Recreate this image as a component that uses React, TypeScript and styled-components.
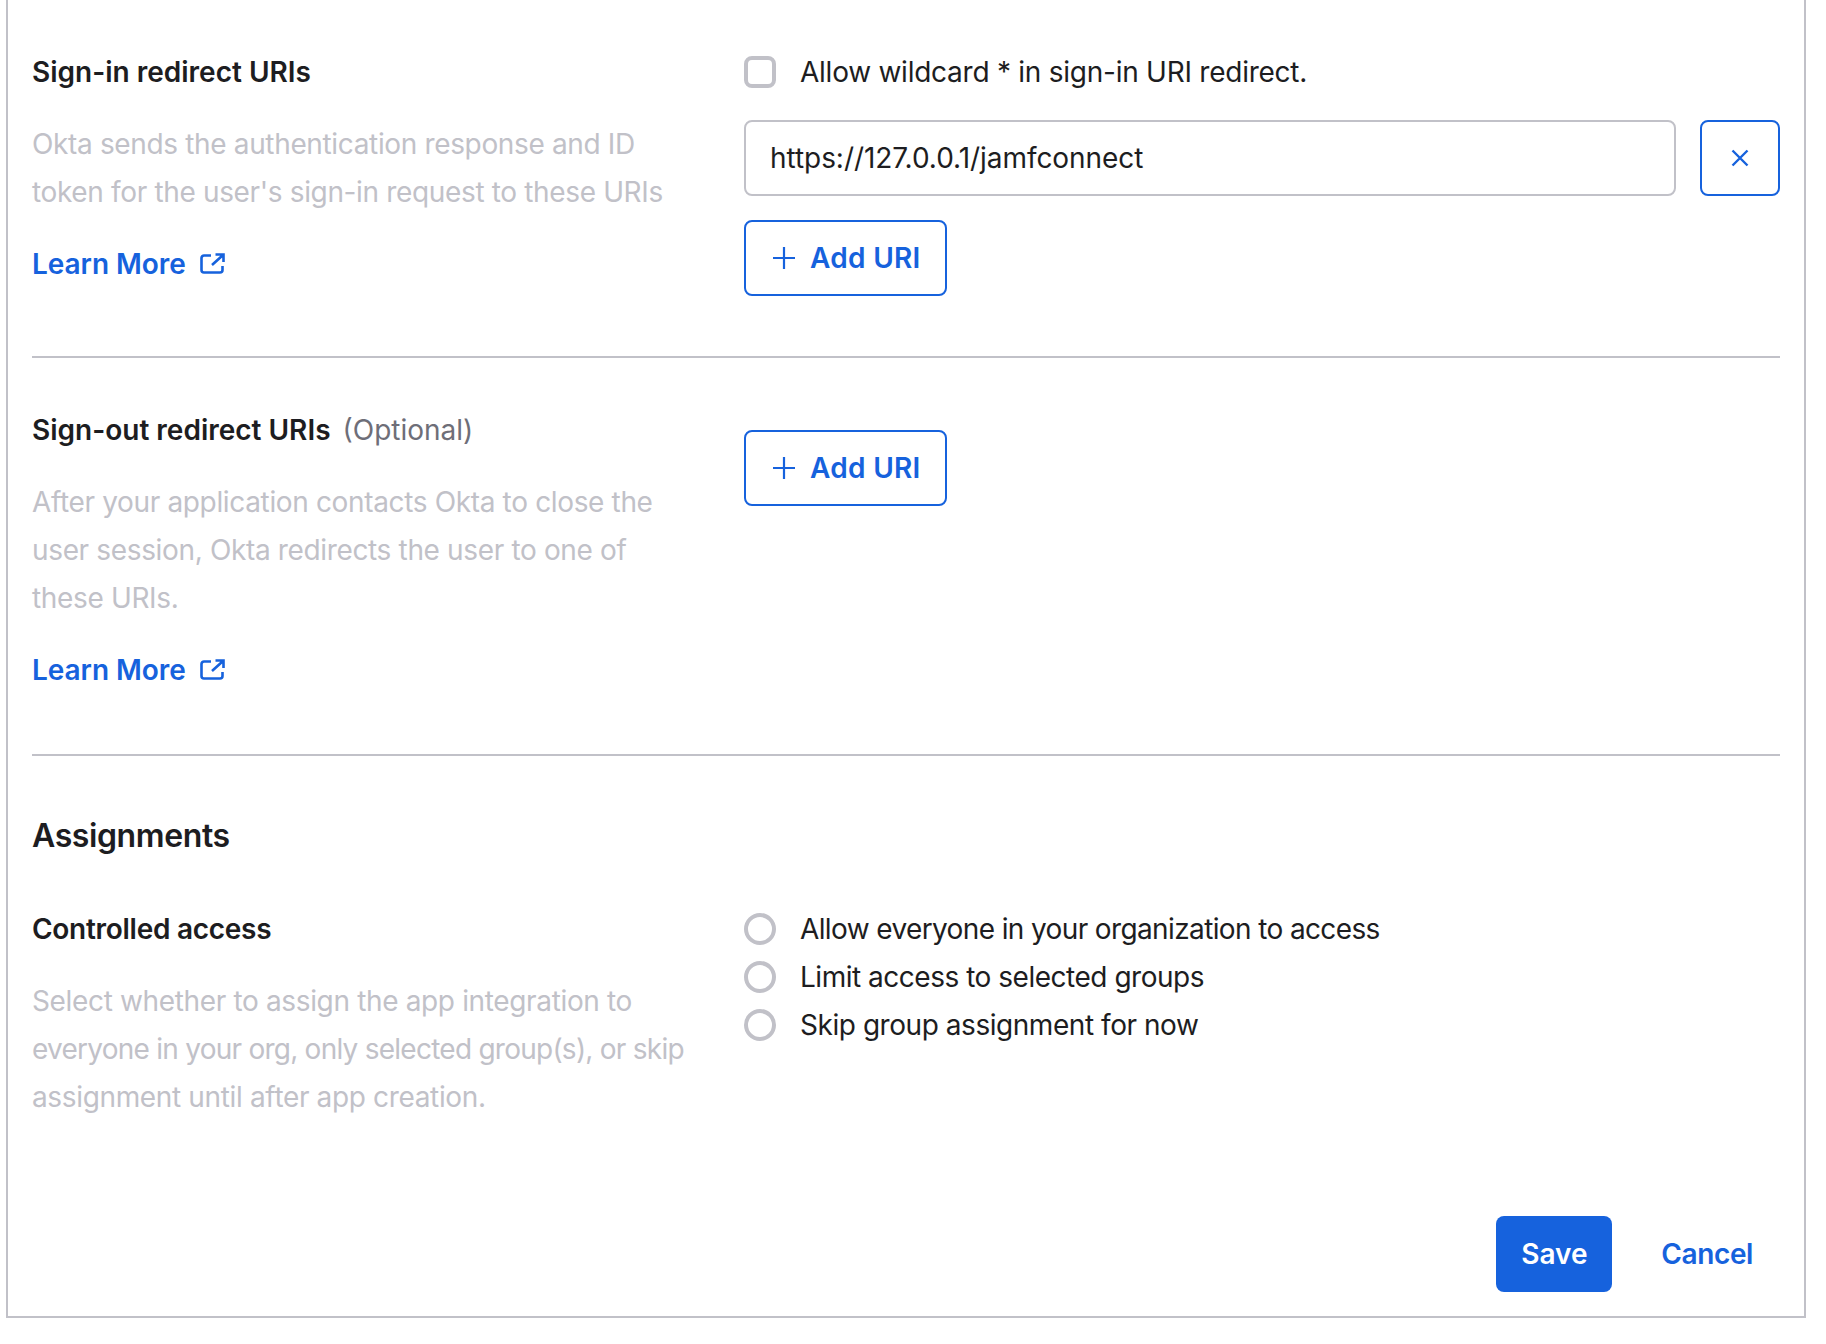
import React from 'react'
import styled, { createGlobalStyle } from 'styled-components'

const COLORS = {
  text: '#1d1d21',
  muted: '#c1c1c8',
  subtle: '#6e6e78',
  border: '#c1c1c8',
  primary: '#1662dd',
  white: '#ffffff',
}

const GlobalStyle = createGlobalStyle`
  html, body {
    margin: 0;
    background: ${COLORS.white};
  }

  body {
    font-family: 'Inter', 'Liberation Sans', sans-serif;
    font-size: 28px;
    line-height: 48px;
    color: ${COLORS.text};
  }
`

const Frame = styled.main`
  box-sizing: border-box;
  width: 1800px;
  height: 1318px;
  margin-left: 6px;
  padding: 0 24px 24px;
  border: 2px solid ${COLORS.border};
  border-top: 0;
  display: flex;
  flex-direction: column;
`

const Section = styled.section<{ $top: number; $bottom: number }>`
  display: grid;
  grid-template-columns: 712px 1036px;
  padding-top: ${(p) => p.$top}px;
  padding-bottom: ${(p) => p.$bottom}px;
`

const Divider = styled.hr`
  width: 100%;
  height: 2px;
  margin: 0;
  border: 0;
  background: ${COLORS.border};
`

const Heading = styled.h2`
  margin: 52px 0 0;
  font-size: 32px;
  line-height: 56px;
  letter-spacing: -0.4px;
  font-weight: 600;
`

const Label = styled.div<{ $tracking?: number }>`
  font-weight: 600;
  letter-spacing: ${(p) => p.$tracking ?? 0}px;
`

const Optional = styled.span`
  margin-left: 12px;
  font-weight: 400;
  color: ${COLORS.subtle};
`

const Description = styled.p`
  margin: 24px 0;
  white-space: nowrap;
  letter-spacing: -0.35px;
  color: ${COLORS.muted};
`

const TightLine = styled.span`
  letter-spacing: -0.75px;
`

const LearnMore = styled.a`
  display: inline-flex;
  align-items: center;
  gap: 14px;
  font-weight: 600;
  letter-spacing: -0.05px;
  color: ${COLORS.primary};
  text-decoration: none;
`

const FieldColumn = styled.div<{ $top?: number }>`
  display: flex;
  flex-direction: column;
  align-items: flex-start;
  gap: 24px;
  padding-top: ${(p) => p.$top ?? 0}px;
`

const CheckRow = styled.label`
  display: flex;
  align-items: center;
  gap: 24px;
  height: 48px;
  letter-spacing: -0.25px;
`

const Checkbox = styled.span`
  box-sizing: border-box;
  width: 32px;
  height: 32px;
  border: 4px solid ${COLORS.border};
  border-radius: 8px;
`

const UriRow = styled.div`
  display: flex;
  gap: 24px;
  width: 100%;
`

const UriInput = styled.input`
  box-sizing: border-box;
  flex: 1;
  height: 76px;
  padding: 0 24px;
  border: 2px solid ${COLORS.border};
  border-radius: 8px;
  font: inherit;
  letter-spacing: -0.05px;
  color: ${COLORS.text};
`

const OutlineButton = styled.button`
  box-sizing: border-box;
  display: flex;
  align-items: center;
  justify-content: center;
  gap: 15px;
  height: 76px;
  padding: 0 24px 0 27px;
  background: ${COLORS.white};
  border: 2px solid ${COLORS.primary};
  border-radius: 8px;
  font: inherit;
  font-weight: 600;
  letter-spacing: 0.3px;
  color: ${COLORS.primary};
`

const IconButton = styled(OutlineButton)`
  width: 80px;
  padding: 0;
`

const RadioList = styled.div`
  display: flex;
  flex-direction: column;
`

const RadioRow = styled.label<{ $tracking: number }>`
  display: flex;
  align-items: center;
  gap: 24px;
  height: 48px;
  letter-spacing: ${(p) => p.$tracking}px;
`

const Radio = styled.span`
  box-sizing: border-box;
  width: 32px;
  height: 32px;
  border: 4px solid ${COLORS.border};
  border-radius: 50%;
`

const Footer = styled.footer`
  display: flex;
  justify-content: flex-end;
  align-items: center;
  margin-top: auto;
`

const SaveButton = styled.button`
  width: 116px;
  height: 76px;
  background: ${COLORS.primary};
  border: 0;
  border-radius: 8px;
  font: inherit;
  font-weight: 600;
  color: ${COLORS.white};
`

const CancelButton = styled.button`
  height: 76px;
  padding: 0 27px;
  margin-left: 22px;
  background: none;
  border: 0;
  font: inherit;
  font-weight: 600;
  letter-spacing: -0.4px;
  color: ${COLORS.primary};
`

const ExternalIcon = () => (
  <svg width="25" height="22" viewBox="0 0 25 22" fill="none" stroke="currentColor" strokeWidth="2.6">
    <path d="M11 2.5H4a2.5 2.5 0 0 0-2.5 2.5v12A2.5 2.5 0 0 0 4 19.5h16a2.5 2.5 0 0 0 2.5-2.5v-4" />
    <path d="M12 12 22.5 2.5M15.5 1.5h8v7.5" />
  </svg>
)

const PlusIcon = () => (
  <svg width="22" height="22" viewBox="0 0 22 22" fill="none" stroke="currentColor" strokeWidth="2.2">
    <path d="M11 0v22M0 11h22" />
  </svg>
)

const CloseIcon = () => (
  <svg width="18" height="18" viewBox="0 0 18 18" fill="none" stroke="currentColor" strokeWidth="2.4">
    <path d="M1.5 1.5l15 15M16.5 1.5l-15 15" />
  </svg>
)

const AddUri = () => (
  <OutlineButton type="button">
    <PlusIcon />
    Add URI
  </OutlineButton>
)

const LearnMoreLink = () => (
  <LearnMore href="#">
    Learn More
    <ExternalIcon />
  </LearnMore>
)

export default function App() {
  return (
    <>
      <GlobalStyle />
      <Frame>
        <Section $top={48} $bottom={60}>
          <div>
            <Label>Sign-in redirect URIs</Label>
            <Description>
              Okta sends the authentication response and ID
              <br />
              token for the user's sign-in request to these URIs
            </Description>
            <LearnMoreLink />
          </div>
          <FieldColumn>
            <CheckRow>
              <Checkbox />
              Allow wildcard * in sign-in URI redirect.
            </CheckRow>
            <UriRow>
              <UriInput defaultValue="https://127.0.0.1/jamfconnect" />
              <IconButton type="button" aria-label="Remove">
                <CloseIcon />
              </IconButton>
            </UriRow>
            <AddUri />
          </FieldColumn>
        </Section>
        <Divider />
        <Section $top={48} $bottom={60}>
          <div>
            <Label>
              Sign-out redirect URIs<Optional>(Optional)</Optional>
            </Label>
            <Description>
              After your application contacts Okta to close the
              <br />
              user session, Okta redirects the user to one of
              <br />
              these URIs.
            </Description>
            <LearnMoreLink />
          </div>
          <FieldColumn $top={24}>
            <AddUri />
          </FieldColumn>
        </Section>
        <Divider />
        <Heading>Assignments</Heading>
        <Section $top={41} $bottom={0}>
          <div>
            <Label $tracking={-0.28}>Controlled access</Label>
            <Description>
              Select whether to assign the app integration to
              <br />
              <TightLine>everyone in your org, only selected group(s), or skip</TightLine>
              <br />
              assignment until after app creation.
            </Description>
          </div>
          <RadioList>
            <RadioRow $tracking={-0.62}>
              <Radio />
              Allow everyone in your organization to access
            </RadioRow>
            <RadioRow $tracking={-0.48}>
              <Radio />
              Limit access to selected groups
            </RadioRow>
            <RadioRow $tracking={-0.45}>
              <Radio />
              Skip group assignment for now
            </RadioRow>
          </RadioList>
        </Section>
        <Footer>
          <SaveButton type="button">Save</SaveButton>
          <CancelButton type="button">Cancel</CancelButton>
        </Footer>
      </Frame>
    </>
  )
}
